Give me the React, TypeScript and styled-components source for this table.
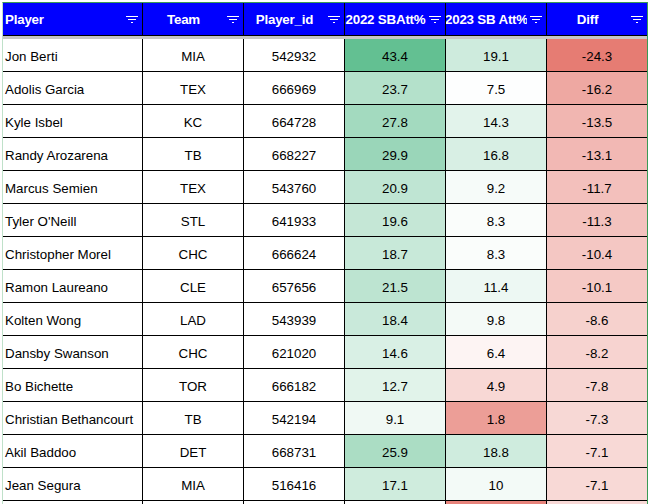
import styled, { createGlobalStyle } from "styled-components";

const GlobalStyle = createGlobalStyle`
	html, body {
		margin: 0;
		padding: 0;
		background: #fff;
		overflow: hidden;
	}
	body {
		font-family: "Liberation Sans", Arial, sans-serif;
		font-size: 10pt;
		color: #000;
	}
`;

type Row = [string, string, string, number, number, number];

const rows: Row[] = [
	["Jon Berti", "MIA", "542932", 43.4, 19.1, -24.3],
	["Adolis Garcia", "TEX", "666969", 23.7, 7.5, -16.2],
	["Kyle Isbel", "KC", "664728", 27.8, 14.3, -13.5],
	["Randy Arozarena", "TB", "668227", 29.9, 16.8, -13.1],
	["Marcus Semien", "TEX", "543760", 20.9, 9.2, -11.7],
	["Tyler O'Neill", "STL", "641933", 19.6, 8.3, -11.3],
	["Christopher Morel", "CHC", "666624", 18.7, 8.3, -10.4],
	["Ramon Laureano", "CLE", "657656", 21.5, 11.4, -10.1],
	["Kolten Wong", "LAD", "543939", 18.4, 9.8, -8.6],
	["Dansby Swanson", "CHC", "621020", 14.6, 6.4, -8.2],
	["Bo Bichette", "TOR", "666182", 12.7, 4.9, -7.8],
	["Christian Bethancourt", "TB", "542194", 9.1, 1.8, -7.3],
	["Akil Baddoo", "DET", "668731", 25.9, 18.8, -7.1],
	["Jean Segura", "MIA", "516416", 17.1, 10, -7.1],
];

// only the top edge of the next row shows, so its colours without text
const nextRow = [5.4, 0.4, -7.0];

const headers = ["Player", "Team", "Player_id", "2022 SBAtt%", "2023 SB Att%", "Diff"];

const GREEN = [87, 187, 138];
const RED = [230, 124, 115];

function mix(to: number[], f: number) {
	const t = Math.max(0, Math.min(1, f));
	const c = to.map((v) => Math.round(255 + (v - 255) * t));
	return `rgb(${c[0]}, ${c[1]}, ${c[2]})`;
}

// rough colour scales read off the sheet
function scale(v: number, min: number, mid: number, max: number) {
	if (v >= mid) return mix(GREEN, (v - mid) / (max - mid));
	return mix(RED, (mid - v) / (mid - min));
}

const fill2022 = (v: number) => scale(v, 0, 5.4, 46.2);
const fill2023 = (v: number) => scale(v, 0, 7, 48.7);
const fillDiff = (v: number) => mix(RED, v / -24.3);

function FilterIcon() {
	return (
		<Icon width="12" height="7" viewBox="0 0 12 7">
			<rect x="0" y="0" width="12" height="1" fill="#fff" />
			<rect x="2" y="3" width="8" height="1" fill="#fff" />
			<rect x="5" y="6" width="2" height="1" fill="#fff" />
		</Icon>
	);
}

export default function App() {
	return (
		<>
			<GlobalStyle />
			<Frame>
				<Sheet>
					{headers.map((h, i) => (
						<HeaderCell key={h}>
							<HeaderLabel $left={i === 0}>
								<span>{h}</span>
							</HeaderLabel>
							<FilterIcon />
						</HeaderCell>
					))}
					<FrozenBar />
					{rows.map((r, i) => (
						<RowGroup key={i}>
							<Cell $align="left">{r[0]}</Cell>
							<Cell>{r[1]}</Cell>
							<Cell>{r[2]}</Cell>
							<Cell $bg={fill2022(r[3])}>{r[3]}</Cell>
							<Cell $bg={fill2023(r[4])}>{r[4]}</Cell>
							<Cell $bg={fillDiff(r[5])}>{r[5]}</Cell>
						</RowGroup>
					))}
					<RowGroup>
						<Cell />
						<Cell />
						<Cell />
						<Cell $bg={fill2022(nextRow[0])} />
						<Cell $bg={fill2023(nextRow[1])} />
						<Cell $bg={fillDiff(nextRow[2])} />
					</RowGroup>
				</Sheet>
			</Frame>
		</>
	);
}

const Frame = styled.div`
	margin: 2px 0 0 2px;
	width: 646px;
	height: 502px;
	overflow: hidden;
	border-top: 1px solid #3a9a55;
	border-left: 1px solid #bfe1c9;
	border-right: 1px solid #3a9a55;
	box-sizing: border-box;
`;

const Sheet = styled.div`
	display: grid;
	grid-template-columns: 140px repeat(5, 101px);
`;

const RowGroup = styled.div`
	display: contents;
`;

const HeaderCell = styled.div`
	height: 33px;
	box-sizing: border-box;
	background: #0000ff;
	color: #fff;
	font-weight: bold;
	border-right: 1px solid #000;
	border-bottom: 1px solid #000;
	display: flex;
	align-items: center;
	overflow: hidden;
`;

const HeaderLabel = styled.div<{ $left?: boolean }>`
	flex: 1;
	min-width: 0;
	overflow: hidden;
	display: flex;
	justify-content: ${(p) => (p.$left ? "flex-start" : "center")};
	padding-left: ${(p) => (p.$left ? "2px" : "0")};
	white-space: nowrap;
	letter-spacing: -0.2px;
	span {
		flex-shrink: 0;
	}
`;

const Icon = styled.svg`
	flex: none;
	margin: 1px 4px 0 3px;
	display: block;
`;

const FrozenBar = styled.div`
	grid-column: 1 / -1;
	height: 3px;
	background: #c6c6c6;
`;

const Cell = styled.div<{ $align?: "left" | "center"; $bg?: string }>`
	height: 33px;
	box-sizing: border-box;
	border-right: 1px solid #000;
	border-bottom: 1px solid #000;
	background: ${(p) => p.$bg ?? "#fff"};
	display: flex;
	align-items: center;
	justify-content: ${(p) => (p.$align === "left" ? "flex-start" : "center")};
	padding: 2px 2px 0;
	white-space: nowrap;
	overflow: hidden;
`;
